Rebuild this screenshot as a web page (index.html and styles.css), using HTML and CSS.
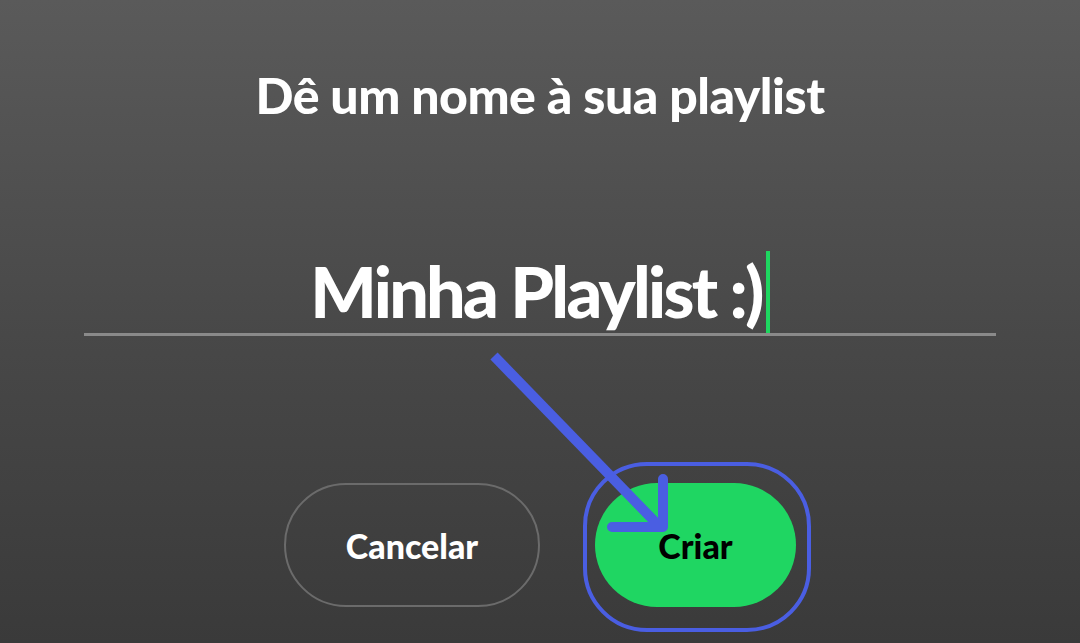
FILE: index.html
```html
<!DOCTYPE html>
<html lang="pt-BR">
<head>
<meta charset="utf-8">
<title>Dê um nome à sua playlist</title>
<link rel="stylesheet" href="styles.css">
</head>
<body>
<main class="screen">
  <h1 class="title">Dê um nome à sua playlist</h1>
  <div class="field">
    <div class="field-value"><span class="field-text">Minha Playlist :)</span><span class="caret"></span></div>
  </div>
  <div class="actions">
    <button class="btn btn-outline" type="button">Cancelar</button>
    <button class="btn btn-primary" type="button">Criar</button>
  </div>
  <svg class="annotation" width="1080" height="643" viewBox="0 0 1080 643" aria-hidden="true">
    <rect x="585" y="464" width="224" height="166" rx="62" ry="62" fill="none" stroke="#4a5ee2" stroke-width="4"/>
    <line x1="494" y1="356" x2="660" y2="527" stroke="#4a5ee2" stroke-width="10" stroke-linecap="butt"/>
    <path d="M663 479 V527 H612" fill="none" stroke="#4a5ee2" stroke-width="10" stroke-linecap="round" stroke-linejoin="round"/>
  </svg>
</main>
</body>
</html>
```

FILE: styles.css
```css
* { box-sizing: border-box; }
html, body { margin: 0; padding: 0; }
body {
  width: 1080px;
  height: 643px;
  overflow: hidden;
  font-family: "Lato", "Liberation Sans", sans-serif;
}
.screen {
  position: relative;
  width: 1080px;
  height: 643px;
  background: linear-gradient(to bottom, #5a5a5a 0%, #474747 55%, #3a3a3a 100%);
  display: flex;
  flex-direction: column;
  align-items: center;
}
.title {
  margin: 65px 0 0;
  color: #ffffff;
  font-size: 50px;
  font-weight: 900;
  letter-spacing: -0.5px;
  line-height: 60px;
  text-align: center;
}
.field {
  margin-top: 124px;
  width: 912px;
  border-bottom: 3px solid #8a8a8a;
  display: flex;
  justify-content: center;
}
.field-value {
  display: flex;
  align-items: flex-end;
  height: 84px;
}
.field-text {
  color: #ffffff;
  font-size: 70px;
  font-weight: 900;
  letter-spacing: -2.7px;
  line-height: 84px;
}
.caret {
  width: 4px;
  height: 82px;
  margin-left: 4px;
  background: #1ed760;
}
.actions {
  margin-top: 147px;
  display: flex;
  gap: 55px;
}
.btn {
  height: 124px;
  border-radius: 62px;
  font-family: "Lato", "Liberation Sans", sans-serif;
  font-size: 34px;
  font-weight: 900;
  letter-spacing: 0;
  cursor: pointer;
}
.btn-outline {
  width: 256px;
  background: transparent;
  color: #ffffff;
  border: 2px solid #6b6b6b;
}
.btn-primary {
  width: 201px;
  background: #1fd662;
  color: #000000;
  border: none;
}
.annotation {
  position: absolute;
  left: 0;
  top: 0;
  pointer-events: none;
}
```
